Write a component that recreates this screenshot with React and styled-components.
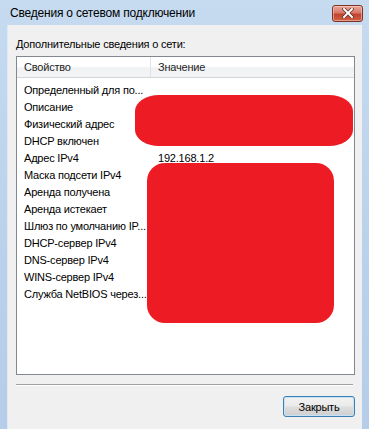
import styled, { createGlobalStyle } from "styled-components";

const GlobalStyle = createGlobalStyle`
    html, body {
        margin: 0;
        padding: 0;
        width: 369px;
        height: 429px;
        overflow: hidden;
        font-family: "Liberation Sans", Arial, sans-serif;
    }
`

const Window = styled.div`
    width: 369px;
    height: 429px;
    display: flex;
    flex-direction: column;
    background: linear-gradient(180deg, #c6dbf0 0%, #b9d1ea 60%, #b5cde8 100%);
`

const TitleBar = styled.div`
    height: 25px;
    display: flex;
    align-items: center;
    justify-content: space-between;
    padding: 0 6px 0 10px;
    box-sizing: border-box;
`

const Title = styled.span`
    font-size: 12px;
    letter-spacing: -0.2px;
    color: #000;
`

const CloseButton = styled.div`
    width: 31px;
    height: 17px;
    margin-top: 1px;
    border: 1px solid #7a3326;
    border-radius: 3px;
    box-sizing: border-box;
    background: linear-gradient(180deg, #e9a897 0%, #d9786a 45%, #c3432e 55%, #cf5f45 100%);
    box-shadow: inset 0 0 0 1px rgba(255, 220, 210, 0.5);
    display: flex;
    align-items: center;
    justify-content: center;
`

const Client = styled.div`
    flex: 1;
    margin: 0 7px;
    background: #f0f0f0;
    border-left: 1px solid #dfe9f5;
    display: flex;
    flex-direction: column;
    padding: 13px 7px 0 8px;
    box-sizing: border-box;
`

const Label = styled.div`
    font-size: 11px;
    letter-spacing: -0.2px;
    color: #000;
    height: 18px;
`

const ListBox = styled.div`
    position: relative;
    height: 319px;
    border: 1px solid #828790;
    background: #fff;
    box-sizing: border-box;
    overflow: hidden;
`

const HeaderRow = styled.div`
    display: grid;
    grid-template-columns: 134px 1fr;
    height: 21px;
    background: linear-gradient(180deg, #ffffff 0%, #ffffff 45%, #f1f2f4 55%, #f3f4f6 100%);
    border-bottom: 1px solid #d5d5d5;
    box-sizing: border-box;
`

const HeaderCell = styled.div`
    display: flex;
    align-items: center;
    padding-left: 7px;
    font-size: 11px;
    letter-spacing: -0.2px;
    color: #1e1e1e;
    border-right: ${props => props.$divider ? "1px solid #e0e2e6" : "none"};
`

const Body = styled.div`
    padding-top: 3px;
`

const Row = styled.div`
    display: grid;
    grid-template-columns: 134px 1fr;
    height: 17px;
    align-items: center;
`

const Cell = styled.div`
    padding-left: 7px;
    font-size: 11px;
    letter-spacing: -0.2px;
    color: #000;
    white-space: nowrap;
    overflow: hidden;
`

const Redact = styled.div`
    position: absolute;
    background: #ed1c24;
`

const RedactTop = styled(Redact)`
    left: 118px;
    top: 38px;
    width: 218px;
    height: 51px;
    border-radius: 24px / 16px;
`

const RedactBottom = styled(Redact)`
    left: 130px;
    top: 106px;
    width: 187px;
    height: 160px;
    border-radius: 18px;
`

const Separator = styled.div`
    margin: 9px 2px 0 0;
    height: 1px;
    background: #a0a0a0;
    border-bottom: 1px solid #fff;
`

const Footer = styled.div`
    display: flex;
    justify-content: flex-end;
    margin-top: 10px;
`

const Button = styled.button`
    width: 72px;
    height: 21px;
    font-family: "Liberation Sans", Arial, sans-serif;
    font-size: 11px;
    letter-spacing: -0.2px;
    color: #000;
    border: 1px solid #3c7fb1;
    border-radius: 3px;
    background: linear-gradient(180deg, #f2f2f2 0%, #ebebeb 45%, #dddddd 55%, #cfcfcf 100%);
    box-shadow: inset 0 0 0 1px #c7e2f6;
    padding: 0;
`

const rows = [
    ["Определенный для по...", ""],
    ["Описание", ""],
    ["Физический адрес", ""],
    ["DHCP включен", ""],
    ["Адрес IPv4", "192.168.1.2"],
    ["Маска подсети IPv4", ""],
    ["Аренда получена", ""],
    ["Аренда истекает", ""],
    ["Шлюз по умолчанию IP...", ""],
    ["DHCP-сервер IPv4", ""],
    ["DNS-сервер IPv4", ""],
    ["WINS-сервер IPv4", ""],
    ["Служба NetBIOS через...", ""],
]

function App() {
    return (
        <>
            <GlobalStyle />
            <Window>
                <TitleBar>
                    <Title>Сведения о сетевом подключении</Title>
                    <CloseButton>
                        <svg width="12" height="10" viewBox="0 0 12 10">
                            <path d="M2 1 L10 9 M10 1 L2 9" stroke="#5a2a22" strokeWidth="3.4" strokeLinecap="square" />
                            <path d="M2 1 L10 9 M10 1 L2 9" stroke="#fff" strokeWidth="2" strokeLinecap="square" />
                        </svg>
                    </CloseButton>
                </TitleBar>
                <Client>
                    <Label>Дополнительные сведения о сети:</Label>
                    <ListBox>
                        <HeaderRow>
                            <HeaderCell $divider>Свойство</HeaderCell>
                            <HeaderCell>Значение</HeaderCell>
                        </HeaderRow>
                        <Body>
                            {rows.map(([name, value]) => (
                                <Row key={name}>
                                    <Cell>{name}</Cell>
                                    <Cell>{value}</Cell>
                                </Row>
                            ))}
                        </Body>
                        <RedactTop />
                        <RedactBottom />
                    </ListBox>
                    <Separator />
                    <Footer>
                        <Button>Закрыть</Button>
                    </Footer>
                </Client>
            </Window>
        </>
    );
}

export default App;
